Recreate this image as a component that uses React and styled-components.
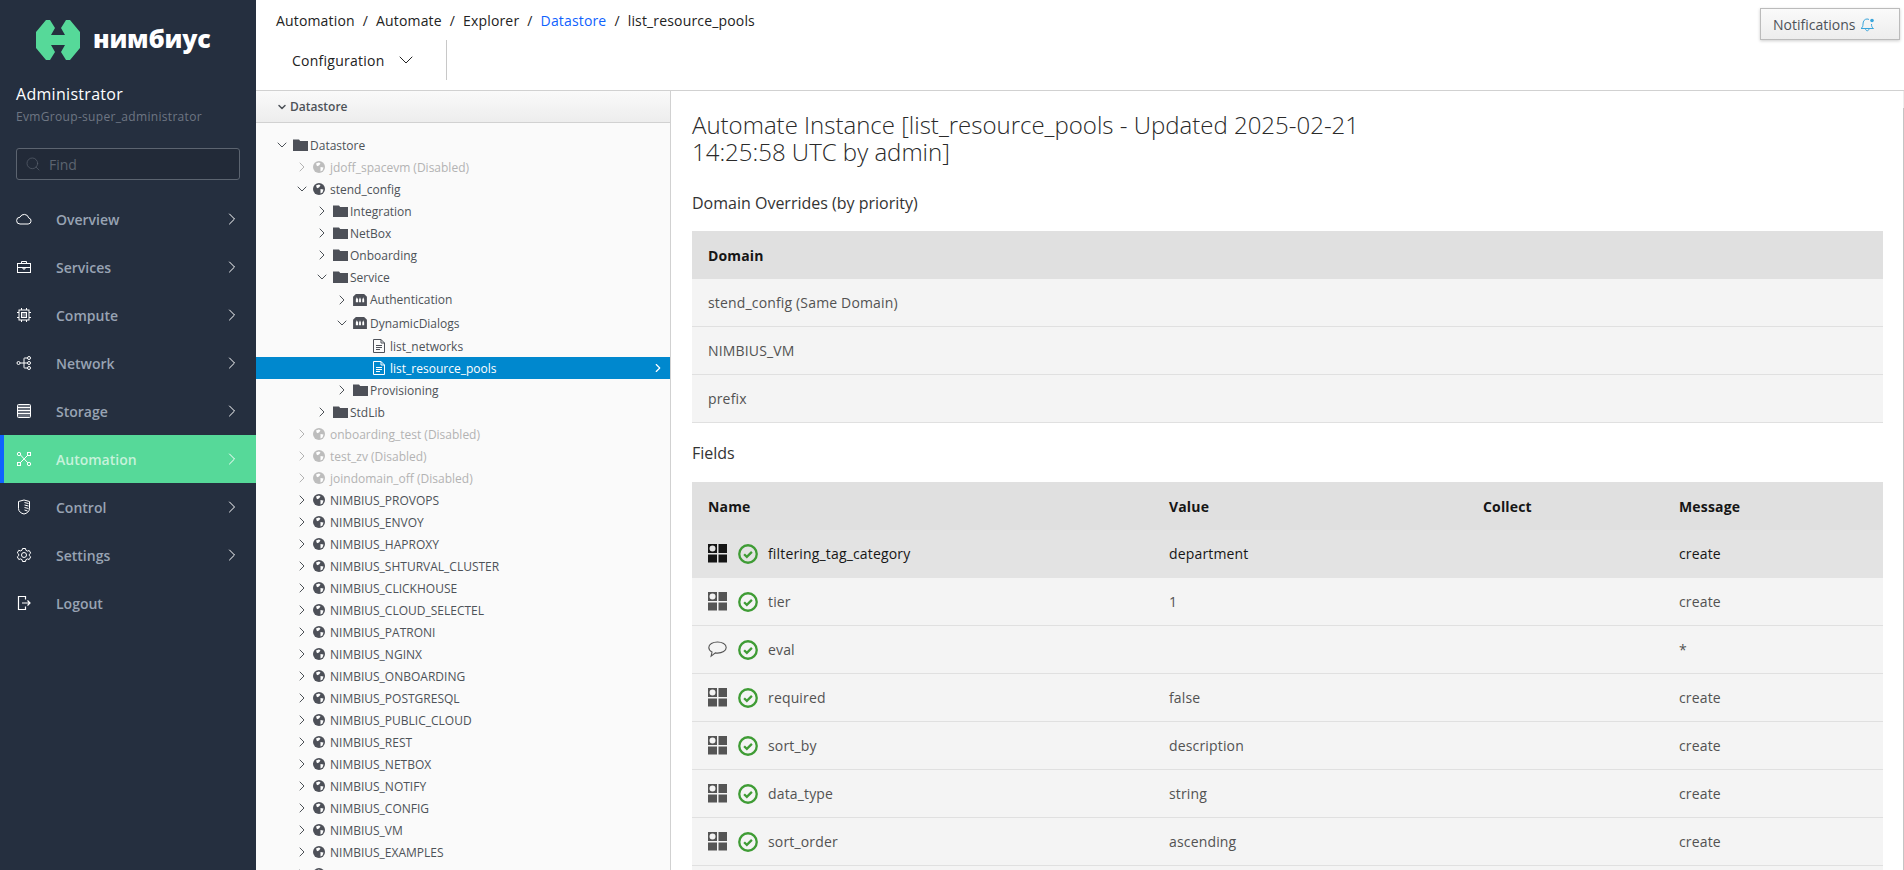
import React from "react";
import styled, { createGlobalStyle } from "styled-components";
import { ChevronRight, ChevronDown, Search } from "lucide-react";

const GlobalStyle = createGlobalStyle`
  html, body {
    margin: 0;
    height: 100%;
    overflow: hidden;
    font-family: "Open Sans", "Noto Sans", sans-serif;
    background: #fff;
  }
  * { box-sizing: border-box; }
`;

/* ---------- sidebar icons ---------- */

const Glyph = ({ children, size = 16 }) => (
  <svg width={size} height={size} viewBox="0 0 16 16" fill="none" stroke="currentColor" strokeWidth="1">
    {children}
  </svg>
);

const navIcons = {
  cloud: (
    <path d="M4 13h8.2a3.1 3.1 0 0 0 .5-6.1A4.6 4.6 0 0 0 4 6.2 3.4 3.4 0 0 0 4 13z" />
  ),
  services: (
    <>
      <rect x="1.500" y="4.500" width="13" height="9" />
      <path d="M5.500 4.500V2.500h5v2M1.500 8.500h13M7 8v2h2V8" />
    </>
  ),
  compute: (
    <>
      <rect x="3" y="3" width="10" height="10" />
      <rect x="5.500" y="5.500" width="5" height="5" fill="currentColor" fillOpacity=".35" />
      <path d="M5.500 1v2M10.500 1v2M5.500 13v2M10.500 13v2M1 5.500h2M1 10.500h2M13 5.500h2M13 10.500h2" />
    </>
  ),
  network: (
    <>
      <circle cx="2.500" cy="8" r="1.500" />
      <circle cx="13" cy="3" r="1.500" />
      <circle cx="13" cy="8" r="1.500" />
      <circle cx="13" cy="13" r="1.500" />
      <path d="M4 8h7.500M8 8V3.500c0-.300.200-.500.500-.500h3M8 8v4.500c0 .300.200.500.500.500h3" />
    </>
  ),
  storage: (
    <>
      <rect x="1.500" y="1.500" width="13" height="13" rx="1" fill="currentColor" fillOpacity=".3" />
      <path d="M1.500 4.500h13M1.500 7.500h13M1.500 10.500h13" />
    </>
  ),
  automation: (
    <>
      <circle cx="3" cy="3" r="1.700" />
      <rect x="1.500" y="11.500" width="3" height="3" />
      <rect x="11.500" y="1.500" width="3" height="3" />
      <circle cx="13" cy="13" r="1.700" />
      <path d="M4.500 4l7.300 7.800M4.500 11.500l7-7" />
    </>
  ),
  control: (
    <>
      <path d="M8 1l5.500 1.500v7c0 3-2.700 5-5.500 5.500-2.800-.500-5.500-2.500-5.500-5.500v-7z" />
      <path d="M8.500 3.500l4 1M8.500 6l4 1M8.500 8.500l4 1M8.500 11l3 1" />
    </>
  ),
  settings: (
    <>
      <circle cx="8" cy="8" r="2.500" />
      <path d="M6.500 1.500h3l.4 1.800 1.500.8 1.800-.6 1.500 2.600-1.400 1.200v1.400l1.400 1.200-1.500 2.600-1.800-.6-1.500.8-.4 1.800h-3l-.4-1.800-1.500-.8-1.800.6-1.500-2.600 1.400-1.200V7.100L1.300 5.900l1.500-2.600 1.800.6 1.500-.8z" />
    </>
  ),
  logout: (
    <>
      <path d="M9.500 4.500v-3h-7v13h7v-3" strokeWidth="1.200" />
      <path d="M6 8h8M11.500 5.500L14 8l-2.500 2.500" strokeWidth="1.200" />
    </>
  ),
};

const Logo = () => (
  <svg width="44" height="40" viewBox="0 0 44 40">
    <path
      fill="#56d999"
      d="M10 0h4l5 8-4 7h14l-4-7 5-8h4l10 12v16L34 40h-4l-5-8 4-7H15l4 7-5 8h-4L0 28V12z"
    />
  </svg>
);

/* ---------- tree icons ---------- */

const FolderIcon = () => (
  <svg width="15" height="12" viewBox="0 0 15 12">
    <path fill="#4d5058" d="M0 .500h6l1.200 1.500H15v10H0z" />
  </svg>
);

const GlobeIcon = ({ dim }) => (
  <svg width="12" height="12" viewBox="0 0 12 12">
    <circle cx="6" cy="6" r="6" fill={dim ? "#bdbdbd" : "#4d5058"} />
    <path fill="#fff" d="M3 2.500l3-1 1.500 1L6 4.500 4 5.200zM7.500 6l3 .5-1 3-2 1z" />
  </svg>
);

const ClassIcon = () => (
  <svg width="14" height="12" viewBox="0 0 15 13">
    <path fill="#4d5058" d="M0 13V3l3-3h9l3 3v10z" />
    <path fill="#fff" d="M3 6l1-2.500L5.500 6v3H3zM6.500 6l1-2.500L8.500 6v3h-2zM10 6l1-2.500L12 6v3h-2z" />
  </svg>
);

const FileIcon = ({ light }) => (
  <svg width="12" height="14" viewBox="0 0 12 14" fill="none" stroke={light ? "#fff" : "#4d5058"}>
    <path d="M.5.500h7.500l3.500 3.500v9.500H.5z" />
    <path d="M8 .500V4h3.500M3 6.500h6M3 8.500h6M3 10.500h4" />
  </svg>
);

const AttrIcon = ({ dark }) => (
  <svg width="19" height="19" viewBox="0 0 19 19" fill={dark ? "#151515" : "#555"}>
    <path fillRule="evenodd" d="M0 0h9v9H0zM4.500 1.500a3 3 0 1 0 0 6 3 3 0 0 0 0-6z" />
    <rect x="10.500" width="8.500" height="9" />
    <rect y="10.500" width="9" height="8" />
    <rect x="10.500" y="10.500" width="8.500" height="8" />
  </svg>
);

const CommentIcon = () => (
  <svg width="19" height="17" viewBox="0 0 19 17" fill="none" stroke="#555" strokeWidth="1.100">
    <path d="M9.500 1C4.800 1 .8 3.200.8 6.500c0 2 1.400 3.600 3.200 4.500l-.9 4.200 4.300-3.300c.7.100 1.400.2 2.100.2 4.700 0 8.700-2.200 8.700-5.600S14.200 1 9.500 1z" />
  </svg>
);

const CheckIcon = () => (
  <svg width="20" height="20" viewBox="0 0 19 19" fill="none" stroke="#3f9c35">
    <circle cx="9.500" cy="9.500" r="8.300" strokeWidth="2.200" />
    <path d="M5.800 9.700l2.600 2.500 4.800-4.700" strokeWidth="2.200" />
  </svg>
);

const BellIcon = () => (
  <svg width="15" height="16" viewBox="0 0 15 16" fill="none" stroke="#39a5dc">
    <path d="M1 12.500c1.500-1 2-2 2-4.500 0-3 1.700-5 4-5 .8 0 1.500.2 2 .6M11.500 8c0 2.500.5 3.500 2 4.500H1M5.500 12.500c0 3 3.500 3 3.500 0" />
    <circle cx="12" cy="4.500" r="1.800" fill="#39a5dc" stroke="none" />
  </svg>
);

/* ---------- data ---------- */

const navItems = [
  { label: "Overview", icon: "cloud", arrow: true },
  { label: "Services", icon: "services", arrow: true },
  { label: "Compute", icon: "compute", arrow: true },
  { label: "Network", icon: "network", arrow: true },
  { label: "Storage", icon: "storage", arrow: true },
  { label: "Automation", icon: "automation", arrow: true, active: true },
  { label: "Control", icon: "control", arrow: true },
  { label: "Settings", icon: "settings", arrow: true },
  { label: "Logout", icon: "logout" },
];

const domains = [
  "NIMBIUS_PROVOPS",
  "NIMBIUS_ENVOY",
  "NIMBIUS_HAPROXY",
  "NIMBIUS_SHTURVAL_CLUSTER",
  "NIMBIUS_CLICKHOUSE",
  "NIMBIUS_CLOUD_SELECTEL",
  "NIMBIUS_PATRONI",
  "NIMBIUS_NGINX",
  "NIMBIUS_ONBOARDING",
  "NIMBIUS_POSTGRESQL",
  "NIMBIUS_PUBLIC_CLOUD",
  "NIMBIUS_REST",
  "NIMBIUS_NETBOX",
  "NIMBIUS_NOTIFY",
  "NIMBIUS_CONFIG",
  "NIMBIUS_VM",
  "NIMBIUS_EXAMPLES",
  "",
];

const treeRows = [
  { depth: 0, label: "Datastore", icon: "folder", open: true },
  { depth: 1, label: "jdoff_spacevm (Disabled)", icon: "globe", dim: true },
  { depth: 1, label: "stend_config", icon: "globe", open: true },
  { depth: 2, label: "Integration", icon: "folder" },
  { depth: 2, label: "NetBox", icon: "folder" },
  { depth: 2, label: "Onboarding", icon: "folder" },
  { depth: 2, label: "Service", icon: "folder", open: true },
  { depth: 3, label: "Authentication", icon: "class", tall: true },
  { depth: 3, label: "DynamicDialogs", icon: "class", open: true, tall: true },
  { depth: 4, label: "list_networks", icon: "file", leaf: true },
  { depth: 4, label: "list_resource_pools", icon: "file", leaf: true, selected: true },
  { depth: 3, label: "Provisioning", icon: "folder" },
  { depth: 2, label: "StdLib", icon: "folder" },
  { depth: 1, label: "onboarding_test (Disabled)", icon: "globe", dim: true },
  { depth: 1, label: "test_zv (Disabled)", icon: "globe", dim: true },
  { depth: 1, label: "joindomain_off (Disabled)", icon: "globe", dim: true },
  ...domains.map((label) => ({ depth: 1, label, icon: "globe" })),
];

const fields = [
  { name: "filtering_tag_category", value: "department", message: "create", hover: true },
  { name: "tier", value: "1", message: "create" },
  { name: "eval", value: "", message: "*", comment: true },
  { name: "required", value: "false", message: "create" },
  { name: "sort_by", value: "description", message: "create" },
  { name: "data_type", value: "string", message: "create" },
  { name: "sort_order", value: "ascending", message: "create" },
];

/* ---------- layout ---------- */

const Page = styled.div`
  display: flex;
  height: 100vh;
  overflow: hidden;
  position: relative;
`;

const Sidebar = styled.aside`
  width: 256px;
  flex: none;
  background: #252f3f;
  color: #fff;
  display: flex;
  flex-direction: column;
`;

const Brand = styled.div`
  height: 80px;
  display: flex;
  align-items: center;
  gap: 13px;
  padding: 0 0 0 36px;
`;

const BrandName = styled.span`
  font-size: 25px;
  font-weight: 800;
  letter-spacing: -0.2px;
  line-height: 1;
  padding-bottom: 3px;
`;

const User = styled.div`
  padding: 3px 16px 0;
`;

const UserName = styled.div`
  font-size: 16px;
  line-height: 22px;
  letter-spacing: 0.3px;
`;

const UserGroup = styled.div`
  font-size: 12px;
  line-height: 18px;
  margin-top: 3px;
  color: #6e7683;
  letter-spacing: 0.32px;
`;

const FindBox = styled.div`
  margin: 22px 16px 15px;
  height: 32px;
  border: 1px solid #5c6470;
  border-radius: 3px;
  background: #222a38;
  display: flex;
  align-items: center;
  gap: 8px;
  padding: 0 8px;
  color: #5c6470;
  font-size: 14px;
`;

const NavItem = styled.div`
  height: 48px;
  display: flex;
  align-items: center;
  padding-right: 14px;
  background: ${(p) => (p.$active ? "#56d999" : "transparent")};
  border-left: ${(p) => (p.$active ? "4px solid #0f62fe" : "none")};
  padding-left: ${(p) => (p.$active ? "12px" : "16px")};
  color: #fff;
`;

const NavIcon = styled.span`
  width: 16px;
  height: 16px;
  display: flex;
`;

const NavLabel = styled.span`
  margin-left: 24px;
  flex: 1;
  font-size: 14px;
  font-weight: 600;
  color: ${(p) => (p.$active ? "#c6f2db" : "#98a3b3")};
`;

const Main = styled.div`
  flex: 1;
  min-width: 0;
  display: flex;
  flex-direction: column;
`;

const TopBar = styled.header`
  height: 91px;
  flex: none;
  border-bottom: 1px solid #d1d1d1;
`;

const Breadcrumb = styled.nav`
  height: 40px;
  padding: 0 20px;
  display: flex;
  align-items: center;
  gap: 8px;
  font-size: 14px;
  letter-spacing: 0.16px;
  color: #222;
`;

const Crumb = styled.span`
  color: ${(p) => (p.$link ? "#0f62fe" : "#222")};
`;

const Toolbar = styled.div`
  display: flex;
  height: 40px;
  margin-left: 16px;
`;

const ToolButton = styled.div`
  width: 175px;
  display: flex;
  align-items: center;
  justify-content: space-between;
  padding: 0 28px 0 20px;
  font-size: 14px;
  letter-spacing: 0.25px;
  color: #222;
  border-right: 1px solid #c8c8c8;
`;

const NotifyButton = styled.button`
  position: absolute;
  top: 8px;
  right: 4px;
  width: 140px;
  height: 32px;
  border: 1px solid #bbb;
  background: linear-gradient(#fafafa, #ededed);
  box-shadow: 0 1px 3px rgba(0, 0, 0, 0.2);
  font: 14px "Open Sans", sans-serif;
  color: #4d5258;
  display: flex;
  align-items: center;
  gap: 5px;
  padding: 0 0 0 12px;
`;

const Body = styled.div`
  flex: 1;
  min-height: 0;
  display: flex;
`;

const TreePanel = styled.section`
  width: 415px;
  flex: none;
  background: #fafafa;
  border-right: 1px solid #d1d1d1;
  overflow: hidden;
`;

const AccordionHead = styled.div`
  height: 32px;
  display: flex;
  align-items: center;
  gap: 2px;
  padding-left: 20px;
  background: linear-gradient(#fafafa, #ededed);
  border-bottom: 1px solid #d1d1d1;
  font-size: 12px;
  font-weight: 600;
  color: #4d5258;
  margin-bottom: 11px;
`;

const TreeRow = styled.div`
  height: ${(p) => (p.$tall ? "23.5px" : "22px")};
  padding-left: ${(p) => 18 + p.$depth * 20}px;
  display: flex;
  align-items: center;
  font-size: 12px;
  white-space: nowrap;
  color: ${(p) => (p.$selected ? "#fff" : p.$dim ? "#b3b3b3" : "#4d5258")};
  background: ${(p) => (p.$selected ? "#0088ce" : "transparent")};
`;

const Toggle = styled.span`
  width: 19px;
  flex: none;
  display: flex;
  color: ${(p) => (p.$dim ? "#b3b3b3" : "#4d5258")};
`;

const TreeIcon = styled.span`
  width: 17px;
  flex: none;
  display: flex;
  align-items: center;
`;

const TreeLabel = styled.span`
  flex: 1;
`;

const SelectedArrow = styled.span`
  display: flex;
  padding-right: 5px;
`;

const Content = styled.main`
  flex: 1;
  min-width: 0;
  padding: 20px 21px 0 21px;
  overflow: hidden;
  color: #363636;
`;

const Title = styled.h1`
  margin: 0 0 26px;
  width: 700px;
  font-size: 24px;
  font-weight: 300;
  line-height: 27px;
  color: #2a2a2a;
`;

const SectionTitle = styled.h3`
  margin: ${(p) => (p.$spaced ? "18px 0 0" : "0")};
  font-size: 16px;
  font-weight: 400;
  line-height: 24px;
  color: #333;
`;

const TableWrap = styled.div`
  margin-top: ${(p) => (p.$tight ? "17px" : "16px")};
  letter-spacing: 0.16px;
`;

const Grid = styled.div`
  display: grid;
  grid-template-columns: ${(p) => p.$cols};
  height: 48px;
  align-items: center;
  padding: ${(p) => (p.$head ? "2px 0 0 16px" : "0 0 0 16px")};
  font-size: 14px;
  background: ${(p) => (p.$head ? "#e0e0e0" : p.$hover ? "#e3e3e3" : "#f4f4f4")};
  border-bottom: 1px solid ${(p) => (p.$head || p.$hover ? "transparent" : "#e0e0e0")};
  color: ${(p) => (p.$head || p.$hover ? "#161616" : "#525252")};
  font-weight: ${(p) => (p.$head ? 700 : 400)};
`;

const NameCell = styled.div`
  display: flex;
  align-items: center;
  gap: 10px;
`;

const RowIcon = styled.span`
  width: 20px;
  display: flex;
`;

const ScrollTrack = styled.div`
  position: absolute;
  top: 91px;
  bottom: 0;
  right: 0;
  width: 1px;
  background: #eee;
`;

const ScrollThumb = styled.div`
  margin-top: 17px;
  height: 100%;
  background: #c4c4c4;
`;

const FIELD_COLS = "461px 314px 196px 1fr";

const treeIcon = (row) => {
  if (row.icon === "folder") return <FolderIcon />;
  if (row.icon === "globe") return <GlobeIcon dim={row.dim} />;
  if (row.icon === "class") return <ClassIcon />;
  return <FileIcon light={row.selected} />;
};

export default function App() {
  return (
    <Page>
      <GlobalStyle />
      <Sidebar>
        <Brand>
          <Logo />
          <BrandName>нимбиус</BrandName>
        </Brand>
        <User>
          <UserName>Administrator</UserName>
          <UserGroup>EvmGroup-super_administrator</UserGroup>
        </User>
        <FindBox>
          <Search size={16} strokeWidth={1} />
          Find
        </FindBox>
        {navItems.map((item) => (
          <NavItem key={item.label} $active={item.active}>
            <NavIcon>
              <Glyph>{navIcons[item.icon]}</Glyph>
            </NavIcon>
            <NavLabel $active={item.active}>{item.label}</NavLabel>
            {item.arrow && <ChevronRight size={20} strokeWidth={1.2} />}
          </NavItem>
        ))}
      </Sidebar>
      <Main>
        <TopBar>
          <Breadcrumb>
            <Crumb>Automation</Crumb>/<Crumb>Automate</Crumb>/<Crumb>Explorer</Crumb>/
            <Crumb $link>Datastore</Crumb>/<Crumb>list_resource_pools</Crumb>
          </Breadcrumb>
          <Toolbar>
            <ToolButton>
              Configuration
              <ChevronDown size={24} strokeWidth={1} />
            </ToolButton>
          </Toolbar>
        </TopBar>
        <Body>
          <TreePanel>
            <AccordionHead>
              <ChevronDown size={12} strokeWidth={3} />
              Datastore
            </AccordionHead>
            {treeRows.map((row, i) => (
              <TreeRow
                key={i}
                $depth={row.depth}
                $dim={row.dim}
                $tall={row.tall}
                $selected={row.selected}
              >
                <Toggle $dim={row.dim}>
                  {!row.leaf &&
                    (row.open ? (
                      <ChevronDown size={16} strokeWidth={1.5} />
                    ) : (
                      <ChevronRight size={16} strokeWidth={1.5} />
                    ))}
                </Toggle>
                <TreeIcon>{treeIcon(row)}</TreeIcon>
                <TreeLabel>{row.label}</TreeLabel>
                {row.selected && (
                  <SelectedArrow>
                    <ChevronRight size={14} strokeWidth={2} />
                  </SelectedArrow>
                )}
              </TreeRow>
            ))}
          </TreePanel>
          <Content>
            <Title>Automate Instance [list_resource_pools - Updated 2025-02-21 14:25:58 UTC by admin]</Title>
            <SectionTitle>Domain Overrides (by priority)</SectionTitle>
            <TableWrap>
              <Grid $head $cols="1fr">Domain</Grid>
              <Grid $cols="1fr">stend_config (Same Domain)</Grid>
              <Grid $cols="1fr">NIMBIUS_VM</Grid>
              <Grid $cols="1fr">prefix</Grid>
            </TableWrap>
            <SectionTitle $spaced>Fields</SectionTitle>
            <TableWrap $tight>
              <Grid $head $cols={FIELD_COLS}>
                <div>Name</div>
                <div>Value</div>
                <div>Collect</div>
                <div>Message</div>
              </Grid>
              {fields.map((f) => (
                <Grid key={f.name} $cols={FIELD_COLS} $hover={f.hover}>
                  <NameCell>
                    <RowIcon>{f.comment ? <CommentIcon /> : <AttrIcon dark={f.hover} />}</RowIcon>
                    <CheckIcon />
                    <span>{f.name}</span>
                  </NameCell>
                  <div>{f.value}</div>
                  <div />
                  <div>{f.message}</div>
                </Grid>
              ))}
              <Grid $cols="1fr" />
            </TableWrap>
          </Content>
        </Body>
      </Main>
      <ScrollTrack>
        <ScrollThumb />
      </ScrollTrack>
      <NotifyButton>
        Notifications
        <BellIcon />
      </NotifyButton>
    </Page>
  );
}
